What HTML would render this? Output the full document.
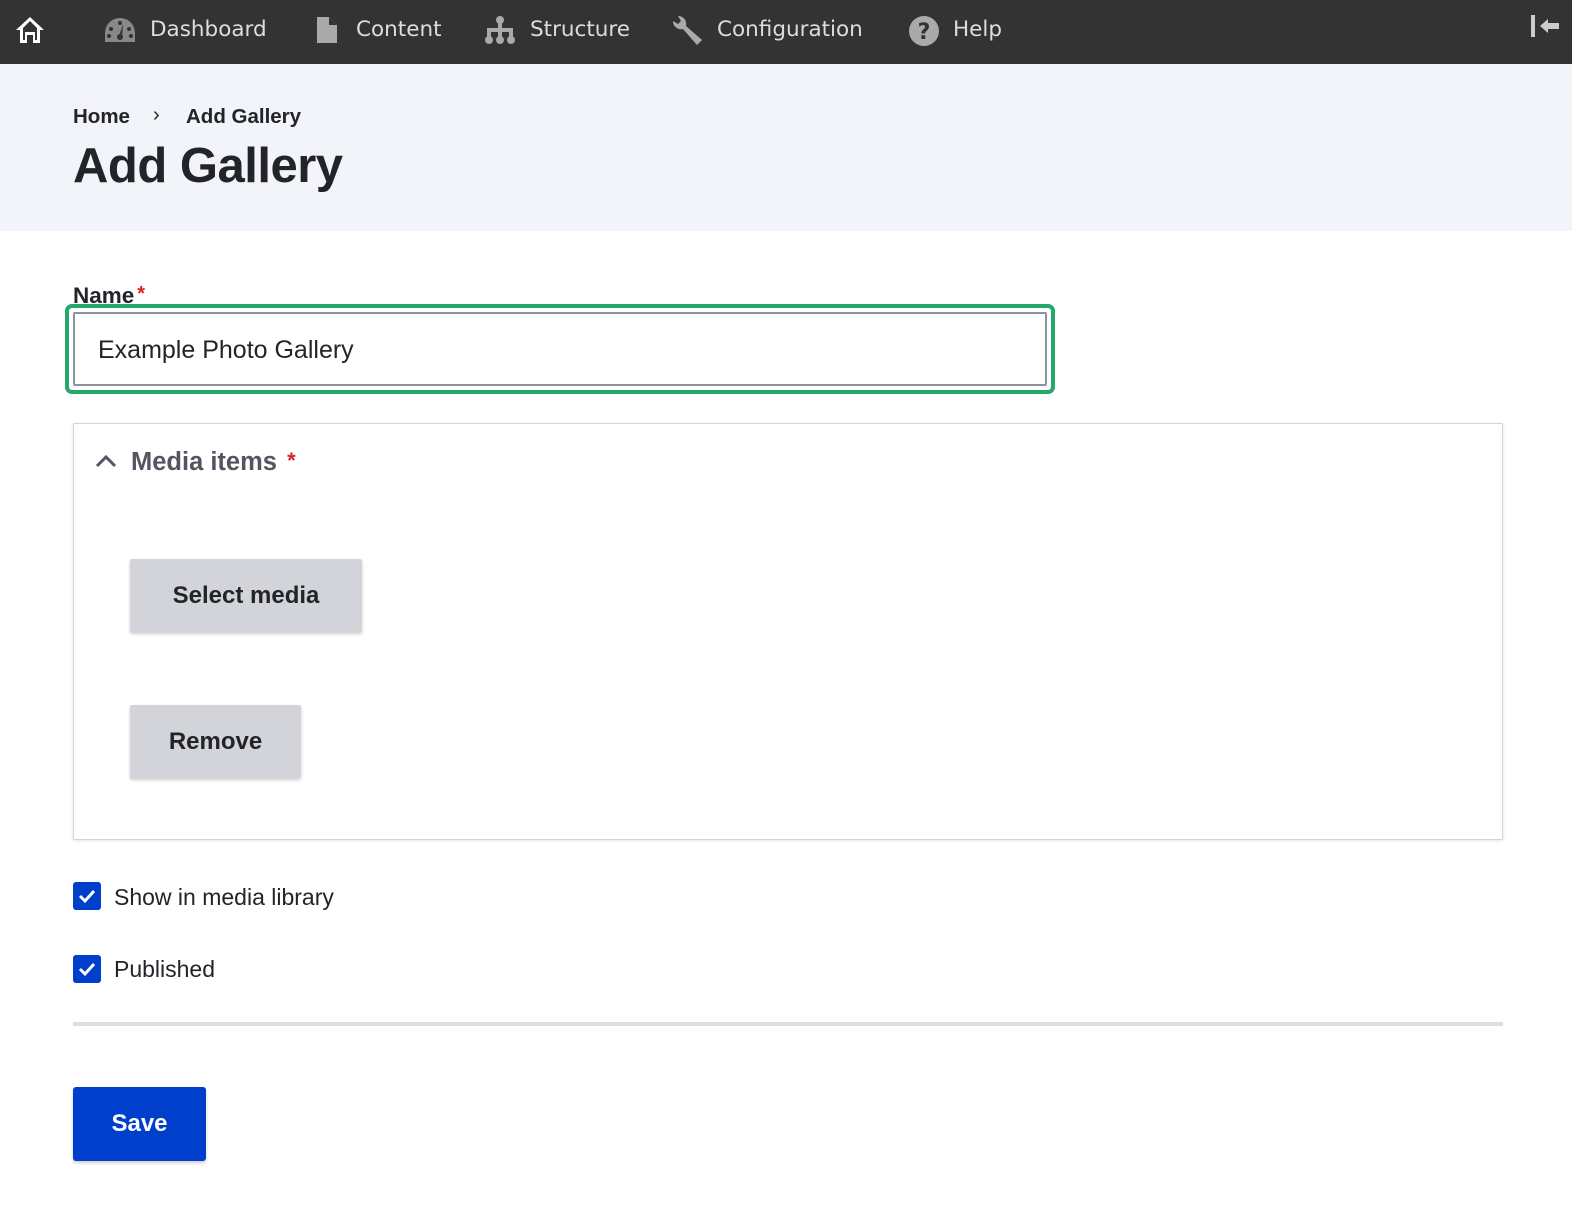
<!DOCTYPE html>
<html><head><meta charset="utf-8"><style>
*{box-sizing:border-box;margin:0;padding:0}
body{width:1572px;height:1218px;background:#fff;font-family:"Liberation Sans",sans-serif;color:#232429;position:relative;overflow:hidden}
.tb{position:absolute;left:0;top:0;width:1572px;height:64px;background:#333}
.tb span{position:absolute;top:17px;font-family:"DejaVu Sans",sans-serif;font-size:21.5px;color:#ddd;letter-spacing:0}
.tb svg{position:absolute}
.hdr{position:absolute;left:0;top:64px;width:1572px;height:167px;background:#f3f4f9}
.abs{position:absolute}
.btn{position:absolute;background:#d3d4d9;border-radius:2px;box-shadow:0 2px 3px rgba(0,0,0,.2);font-weight:bold;font-size:24px;color:#232429;text-align:center}
.cb{position:absolute;left:73px;width:28px;height:28px;background:#003ecc;border-radius:3px}
</style></head><body>
<div class="tb">
<svg style="left:14px;top:14px" width="32" height="32" viewBox="0 0 32 32"><path d="M16 3 L2 16 L6 16 L6 29 L13 29 L13 21 L19 21 L19 29 L26 29 L26 16 L30 16 Z" fill="#fff"/><path d="M16 7 L9 14 L9 26 L11 26 L11 18 L21 18 L21 26 L23 26 L23 14Z" fill="#333"/></svg>
<svg style="left:104px;top:16px" width="32" height="28" viewBox="0 0 32 28"><path d="M16 2 A15 15 0 0 0 1 17 L1 26 L31 26 L31 17 A15 15 0 0 0 16 2Z" fill="#888"/><path d="M19 8 L15 20 L18 21Z" fill="#333"/><circle cx="16" cy="21" r="3" fill="#333"/><circle cx="7" cy="13" r="2" fill="#333"/><circle cx="16" cy="7" r="2" fill="#333"/><circle cx="25" cy="13" r="2" fill="#333"/><circle cx="5" cy="20" r="2" fill="#333"/><circle cx="27" cy="20" r="2" fill="#333"/></svg>
<span style="left:150px">Dashboard</span>
<svg style="left:316px;top:16px" width="22" height="28" viewBox="0 0 22 28"><path d="M1 1 L13 1 L21 9 L21 27 L1 27Z" fill="#aaa"/><path d="M13 1 L13 9 L21 9" fill="#333"/></svg>
<span style="left:356px">Content</span>
<svg style="left:484px;top:15px" width="32" height="30" viewBox="0 0 32 30"><circle cx="16" cy="5" r="4" fill="#aaa"/><rect x="14" y="5" width="4" height="10" fill="#aaa"/><rect x="4" y="13" width="24" height="4" fill="#aaa"/><rect x="3" y="13" width="4" height="12" fill="#aaa"/><rect x="14" y="13" width="4" height="12" fill="#aaa"/><rect x="25" y="13" width="4" height="12" fill="#aaa"/><circle cx="5" cy="25" r="4" fill="#aaa"/><circle cx="16" cy="25" r="4" fill="#aaa"/><circle cx="27" cy="25" r="4" fill="#aaa"/></svg>
<span style="left:530px">Structure</span>
<svg style="left:670px;top:13px" width="34" height="34" viewBox="0 0 34 34"><path d="M3 8 A8 8 0 0 0 13 16 L27 32 L32 27 L16 13 A8 8 0 0 0 8 3 L11 8 L8 11Z" fill="#aaa"/></svg>
<span style="left:717px">Configuration</span>
<svg style="left:908px;top:15px" width="32" height="32" viewBox="0 0 32 32"><circle cx="16" cy="16" r="15" fill="#aaa"/><text x="16" y="24" text-anchor="middle" font-family="DejaVu Sans" font-weight="bold" font-size="22" fill="#333">?</text></svg>
<span style="left:953px">Help</span>
<div class="abs" style="left:1531px;top:15px;width:4px;height:22px;background:#ccc"></div>
<svg style="left:1540px;top:19px" width="20" height="14" viewBox="0 0 20 14"><path d="M0 7 L8 0 L8 4 L19 4 L19 10 L8 10 L8 14Z" fill="#ccc"/></svg>
</div>
<div class="hdr"></div>
<div class="abs" style="left:73px;top:105px;font-size:20.5px;font-weight:bold">Home</div>
<div class="abs" style="left:153px;top:104px;font-size:20px">›</div>
<div class="abs" style="left:186px;top:105px;font-size:20.5px;font-weight:bold">Add Gallery</div>
<div class="abs" style="left:73px;top:138px;font-size:49px;font-weight:bold;letter-spacing:-0.5px">Add Gallery</div>
<div class="abs" style="left:73px;top:283px;font-size:22.5px;font-weight:bold">Name<span style="color:#d72222;font-size:20px;vertical-align:top;margin-left:3px">*</span></div>
<div class="abs" style="left:65px;top:304px;width:990px;height:90px;border:4px solid #26a769;border-radius:7px"></div>
<div class="abs" style="left:73px;top:312px;width:974px;height:74px;border:2px solid #8e929c;border-radius:2px;padding:22px 23px;font-size:25px">Example Photo Gallery</div>
<div class="abs" style="left:73px;top:423px;width:1430px;height:417px;border:1px solid #d3d4d9;box-shadow:0 1px 3px rgba(0,0,0,.1);border-radius:2px"></div>
<svg class="abs" style="left:95px;top:454px" width="22" height="14" viewBox="0 0 22 14"><path d="M2 12 L11 3 L20 12" stroke="#545560" stroke-width="3" fill="none"/></svg>
<div class="abs" style="left:131px;top:448px;font-size:25.5px;font-weight:bold;color:#545560">Media items <span style="color:#d72222;font-size:22px;vertical-align:top;margin-left:3px">*</span></div>
<div class="btn" style="left:130px;top:559px;width:232px;height:73px;line-height:73px">Select media</div>
<div class="btn" style="left:130px;top:705px;width:171px;height:73px;line-height:73px">Remove</div>
<div class="cb" style="top:882px"><svg width="28" height="28" viewBox="0 0 28 28"><path d="M7 14 L12 19 L21 9" stroke="#fff" stroke-width="3" fill="none"/></svg></div>
<div class="abs" style="left:114px;top:884px;font-size:23px">Show in media library</div>
<div class="cb" style="top:955px"><svg width="28" height="28" viewBox="0 0 28 28"><path d="M7 14 L12 19 L21 9" stroke="#fff" stroke-width="3" fill="none"/></svg></div>
<div class="abs" style="left:114px;top:956px;font-size:23px">Published</div>
<div class="abs" style="left:73px;top:1022px;width:1430px;height:4px;background:#dedfe4"></div>
<div class="abs" style="left:73px;top:1087px;width:133px;height:74px;background:#003ecc;border-radius:3px;color:#fff;font-weight:bold;font-size:24px;text-align:center;line-height:74px;box-shadow:0 2px 3px rgba(0,0,0,.2)">Save</div>
</body></html>
